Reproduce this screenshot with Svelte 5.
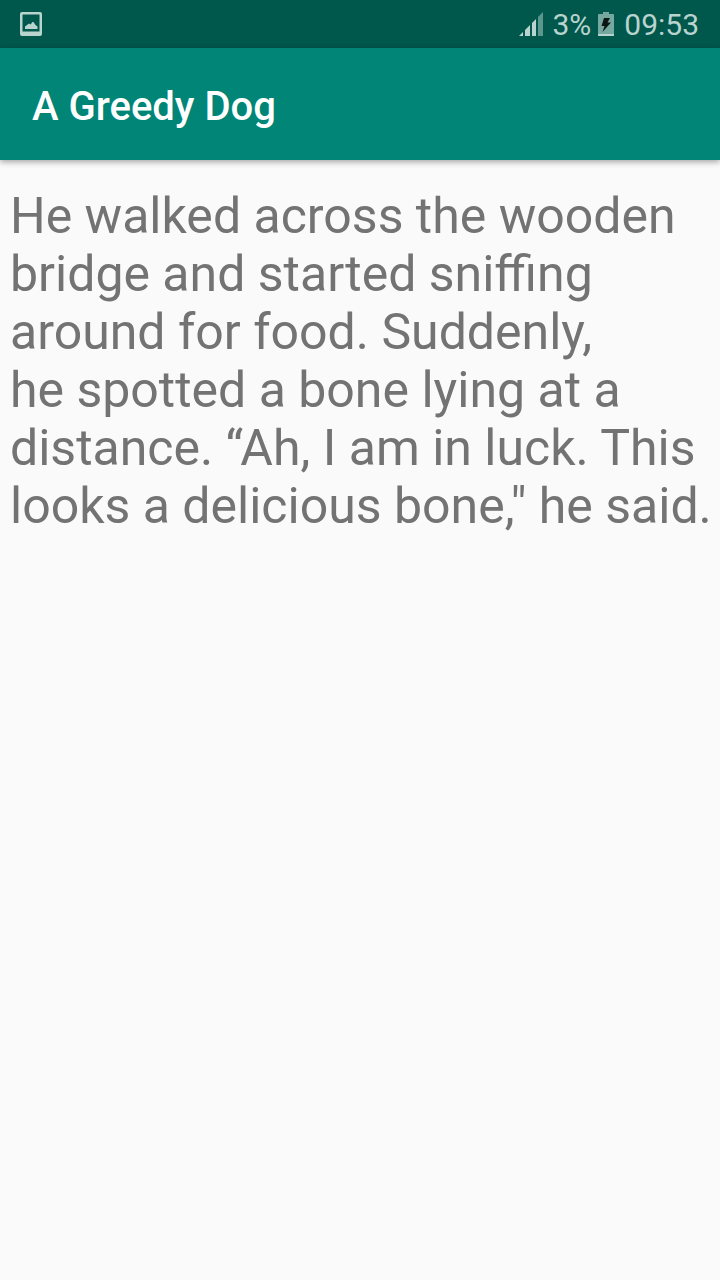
<script>
  const title = 'A Greedy Dog';
  const lines = [
    'He walked across the wooden',
    'bridge and started sniffing',
    'around for food. Suddenly,',
    'he spotted a bone lying at a',
    'distance. “Ah, I am in luck. This',
    'looks a delicious bone," he said.'
  ];
</script>

<div class="screen">
  <div class="status">
    <svg width="22" height="24" viewBox="0 0 22 24" aria-hidden="true">
      <path
        d="M2 0 H20 Q22 0 22 2 V22 Q22 24 20 24 H2 Q0 24 0 22 V2 Q0 0 2 0 Z M2.500 2.500 V19.500 H19.500 V2.500 Z"
        fill="#b9d3cf"
        fill-rule="evenodd"
      />
      <path d="M5 17 V14.500 L7 13 L9 11.500 L10.500 12.500 L12.500 10 H13.500 L15.500 13 L17.500 14.500 V17 Z" fill="#b9d3cf" />
    </svg>
    <div class="right">
      <svg width="24" height="24" viewBox="0 0 24 24" aria-hidden="true">
        <g fill="#b9d3cf">
          <path d="M0 24 L4 20 V24 Z" />
          <path d="M6 24 V18 L11 13 V24 Z" />
          <path d="M13 24 V11 L17 7 V24 Z" />
        </g>
        <path d="M19 24 V5 L24 0 V24 Z" fill="#5b978c" />
      </svg>
      <span class="percent">3%</span>
      <svg class="battery" width="16" height="24" viewBox="0 0 16 24" aria-hidden="true">
        <path d="M5 0 H11 V2 H15 Q16 2 16 3 V23 Q16 24 15 24 H1 Q0 24 0 23 V3 Q0 2 1 2 H5 Z" fill="#75a89f" />
        <path d="M0 22 H16 V23 Q16 24 15 24 H1 Q0 24 0 23 Z" fill="#b9d3cf" />
        <path d="M6 6 H12 L9.500 10.500 H13 L4.500 20 L6.500 14 H3.500 Z" fill="#0c1715" />
      </svg>
      <span>09:53</span>
    </div>
  </div>
  <header><h1>{title}</h1></header>
  <main>
    <p>{#each lines as line, i}{line}{#if i < lines.length - 1}<br />{/if}{/each}</p>
  </main>
</div>

<style>
  :global(body) { margin: 0; background: #fafafa; }
  .screen { min-height: 100vh; font-family: Roboto, sans-serif; background: #fafafa; }
  .status { display: flex; align-items: center; justify-content: space-between; height: 48px; padding: 0 21px 0 20px; background: #00574b; color: #b9d3cf; font-size: 30px; line-height: 48px; }
  .right { display: flex; align-items: center; }
  .right span { padding-top: 2px; line-height: 46px; }
  .percent { margin: 0 7px 0 9px; }
  .battery { margin-right: 10px; }
  header { display: flex; align-items: center; height: 112px; padding: 0 32px; background: #008577; box-shadow: 0 2px 6px rgba(0, 0, 0, 0.35); }
  h1 { margin: 6px 0 0; color: #fff; font-size: 40px; font-weight: 500; line-height: 48px; }
  main { padding: 27px 10px; }
  p { margin: 0; color: #737373; font-size: 50px; line-height: 58px; white-space: nowrap; }
</style>
